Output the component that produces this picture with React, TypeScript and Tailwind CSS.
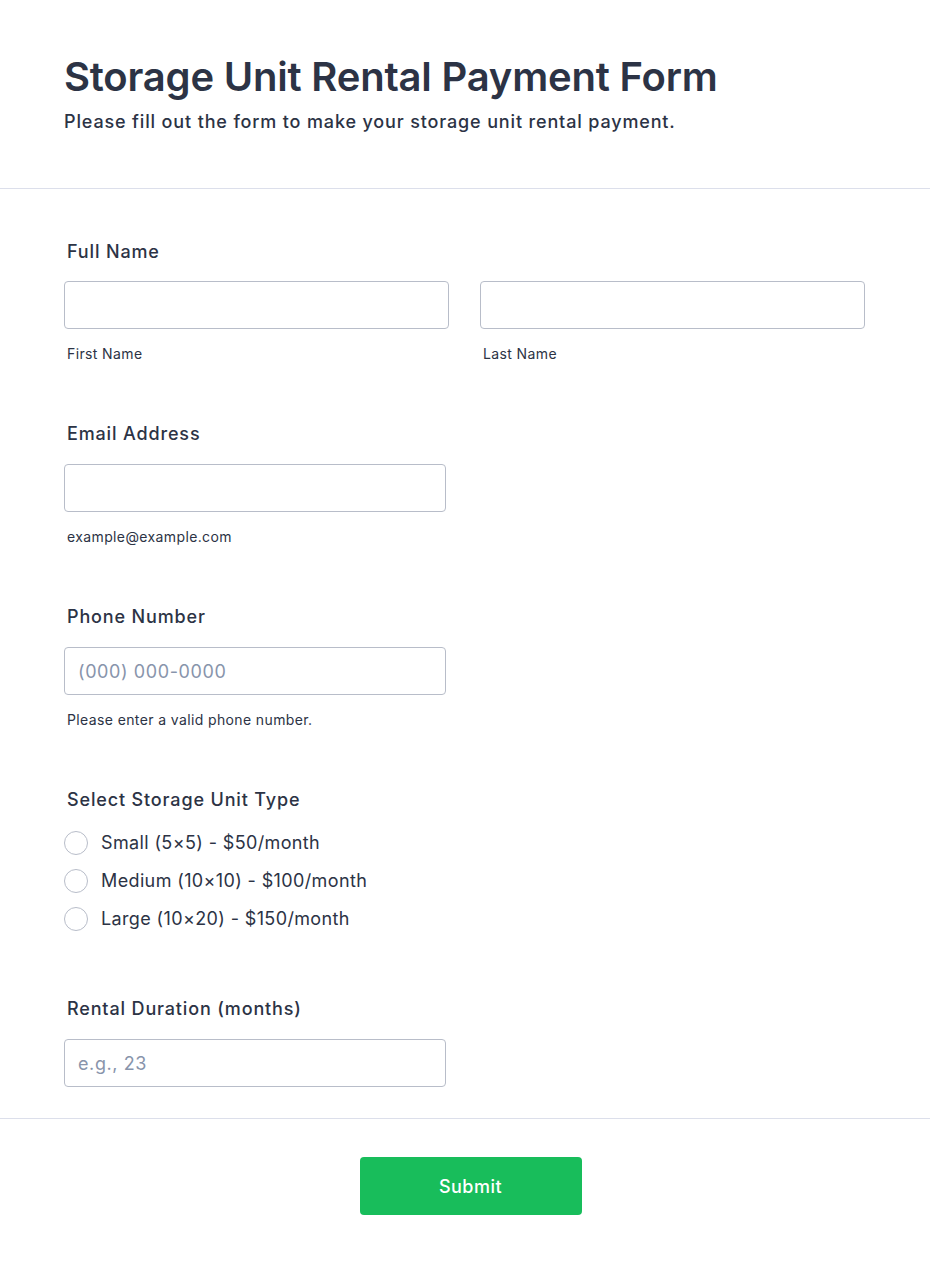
import React from 'react'

const FONT = { fontFamily: 'Inter, "Noto Sans", sans-serif' }

const inputCls =
  'h-12 w-full rounded border border-[#b8bdc9] bg-white px-[13px] text-[18px] tracking-[0.6px] text-[#2c3345] placeholder:text-[#8894ab] outline-none'

function Label({ children }: { children: React.ReactNode }) {
  return (
    <label className="ml-[3px] block text-[18px] font-medium leading-6 tracking-[0.85px] text-[#2c3345]">
      {children}
    </label>
  )
}

function Sub({ children }: { children: React.ReactNode }) {
  return <div className="ml-[3px] mt-[15px] text-[14px] leading-5 tracking-[0.38px] text-[#2c3345]">{children}</div>
}

export default function App() {
  const units = ['Small (5×5) - $50/month', 'Medium (10×10) - $100/month', 'Large (10×20) - $150/month']
  return (
    <div className="min-h-screen bg-white" style={FONT}>
      {/* header */}
      <div className="border-b border-[#dcdfeb] px-16 pb-[54px] pt-[53px]">
        <h1 className="text-[40px] font-semibold leading-[48px] tracking-[-0.2px] text-[#2c3345]">
          Storage Unit Rental Payment Form
        </h1>
        <p className="mt-[9px] text-[18px] font-medium leading-6 tracking-[0.85px] text-[#2c3345]">
          Please fill out the form to make your storage unit rental payment.
        </p>
      </div>

      {/* fields */}
      <div className="border-b border-[#dcdfeb] pb-[31px] pl-16 pr-[65px] pt-[51px]">
        <div>
          <Label>Full Name</Label>
          <div className="mt-[17px] grid grid-cols-2 gap-[31px]">
            <div>
              <input className={inputCls} />
              <Sub>First Name</Sub>
            </div>
            <div>
              <input className={inputCls} />
              <Sub>Last Name</Sub>
            </div>
          </div>
        </div>

        <div className="mt-[58px] w-[382px]">
          <Label>Email Address</Label>
          <input className={`${inputCls} mt-[18px]`} />
          <Sub>example@example.com</Sub>
        </div>

        <div className="mt-[58px] w-[382px]">
          <Label>Phone Number</Label>
          <input className={`${inputCls} mt-[18px]`} placeholder="(000) 000-0000" />
          <Sub>Please enter a valid phone number.</Sub>
        </div>

        <div className="mt-[58px]">
          <Label>Select Storage Unit Type</Label>
          <div className="mt-[19px] flex flex-col gap-[14px]">
            {units.map((u) => (
              <label key={u} className="flex h-6 items-center gap-[13px]">
                <span className="h-6 w-6 shrink-0 rounded-full border border-[#b8bdc9] bg-white" />
                <span className="text-[18px] leading-6 tracking-[0.37px] text-[#2c3345]">{u}</span>
              </label>
            ))}
          </div>
        </div>

        <div className="mt-[66px] w-[382px]">
          <Label>Rental Duration (months)</Label>
          <input className={`${inputCls} mt-[18px]`} placeholder="e.g., 23" />
        </div>
      </div>

      {/* footer */}
      <div className="flex justify-center pb-[50px] pl-[11px] pt-[38px]">
        <button className="h-[58px] w-[222px] rounded bg-[#18bd5b] text-[18px] font-medium tracking-[0.5px] text-white">
          Submit
        </button>
      </div>
    </div>
  )
}
